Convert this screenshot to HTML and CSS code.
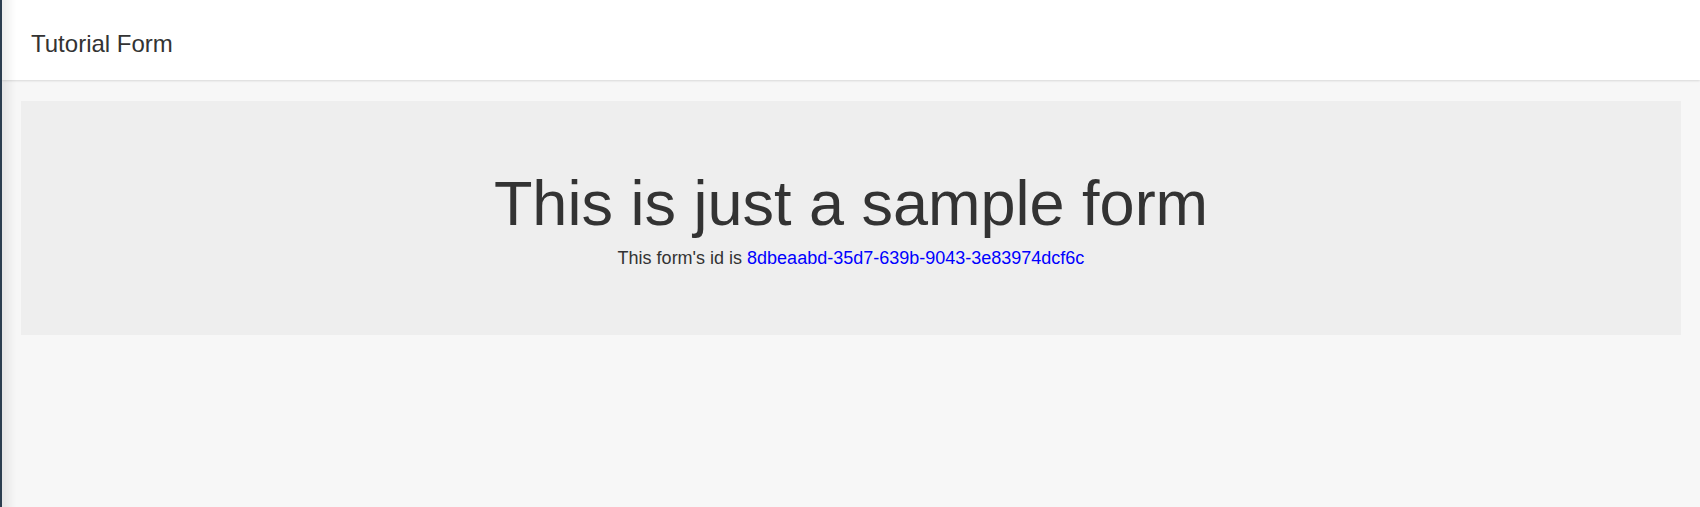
FILE: index.html
```html
<!DOCTYPE html>
<html lang="en">
<head>
<meta charset="utf-8">
<title>Tutorial Form</title>
<link rel="stylesheet" href="styles.css">
</head>
<body>
<div class="edge"></div>
<div class="app">
  <header class="navbar">
    <span class="brand">Tutorial Form</span>
  </header>
  <main class="content">
    <section class="jumbotron">
      <h1 class="title">This is just a sample form</h1>
      <p class="subtitle">This form's id is <a class="form-id" href="#">8dbeaabd-35d7-639b-9043-3e83974dcf6c</a></p>
    </section>
  </main>
</div>
</body>
</html>
```

FILE: styles.css
```css
* { box-sizing: border-box; }

html, body {
  margin: 0;
  padding: 0;
  height: 100%;
}

body {
  background: #f7f7f7;
  font-family: "Liberation Sans", Arial, sans-serif;
  font-size: 14px;
  color: #333;
  overflow: hidden;
}

.edge {
  position: fixed;
  left: 0;
  top: 0;
  bottom: 0;
  width: 16px;
  border-left: 2px solid #2c3e50;
  background: linear-gradient(to right, rgba(0,0,0,0.07), rgba(0,0,0,0));
  z-index: 10;
  pointer-events: none;
}

.app {
  margin-left: 2px;
  min-height: 100%;
}

.navbar {
  height: 80px;
  background: #fff;
  display: flex;
  align-items: flex-start;
  padding: 31px 0 0 29px;
  box-shadow: 0 1px 2px rgba(0,0,0,0.12);
  position: relative;
}

.brand {
  font-size: 24px;
  color: #333;
  line-height: 26px;
}

.content {
  padding: 21px 19px 0 19px;
}

.jumbotron {
  background: #eee;
  padding: 48px 20px;
  text-align: center;
}

.title {
  margin: 20px 0 10px;
  font-size: 63px;
  font-weight: 400;
  line-height: 1.1;
  color: #333;
}

.subtitle {
  margin: 4px 0 19px;
  font-size: 18px;
  line-height: 20px;
  color: #333;
}

.form-id {
  color: #0000ff;
  text-decoration: none;
}
```
